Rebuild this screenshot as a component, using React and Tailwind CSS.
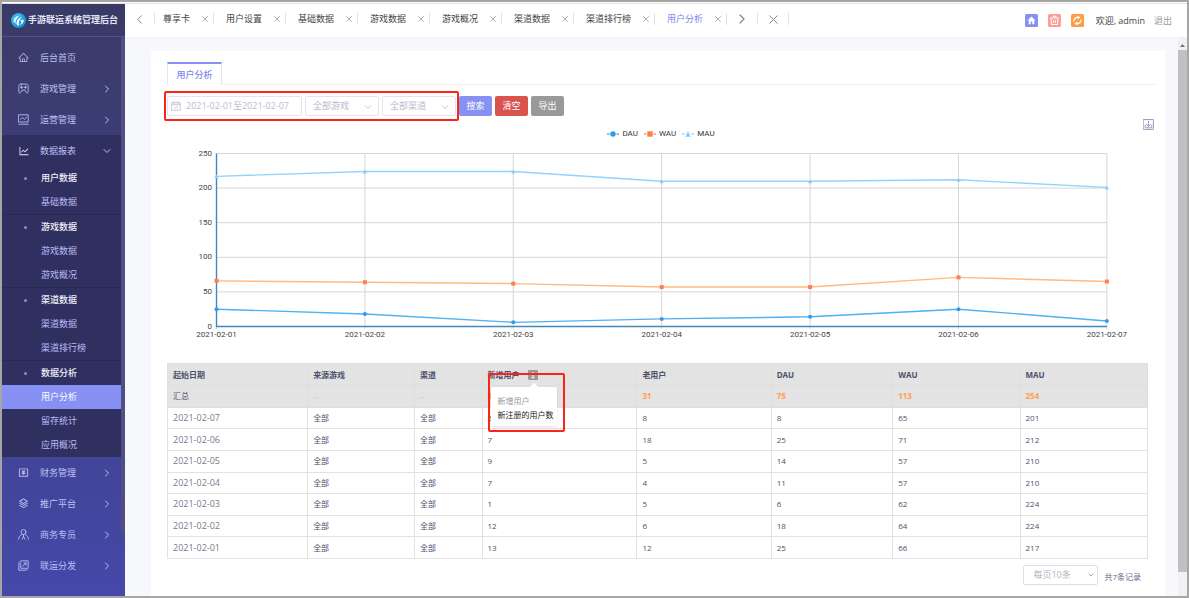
import React from "react";
import { ChevronDown, ChevronLeft, ChevronRight, X } from "lucide-react";
import { AiOutlineHome, AiOutlineLineChart } from "react-icons/ai";
import { RiMoneyCnyBoxLine, RiStackLine } from "react-icons/ri";

const stroke = {
  viewBox: "0 0 20 20",
  fill: "none",
  stroke: "currentColor",
  strokeWidth: 1.6,
  strokeLinecap: "round",
  strokeLinejoin: "round",
};

const GameIcon = (p) => (
  <svg {...stroke} {...p}>
    <path d="M5.500 2h9c3 0 4 1.500 4 4.500V16c0 2.500-2.500 3-3.500 1.200L12.800 13H7.200L5 17.200C4 19 1.500 18.500 1.500 16V6.500C1.500 3.500 2.500 2 5.500 2z" />
    <path d="M6.500 5.500v4.400M4.300 7.700h4.400M13.500 5.500v4.400M11.300 7.700h4.400" />
  </svg>
);
const MonitorIcon = (p) => (
  <svg {...stroke} {...p}>
    <path d="M1.500 1.500h17v13h-17zM1.500 18.500h17M4.500 9.500l3.500-3 3.500 3 4-3.500" />
  </svg>
);
const PersonIcon = (p) => (
  <svg {...stroke} {...p}>
    <circle cx="10" cy="5.500" r="4.500" />
    <path d="M1 18.500c.3-4 2-6.500 6-8.500M19 18.500c-.3-4-2-6.500-6-8.500M10 10.500V14M10 14l-2.500 4.500M10 14l2.500 4.500" />
  </svg>
);
const ShareIcon = (p) => (
  <svg {...stroke} {...p}>
    <path d="M6 1.500h12.500v13L15 18.500H1.500V5.500zM5 5.500V15h10.500M8.500 11.500l6-6M10.500 5.300h4.200v4.200" />
  </svg>
);
const Logo = () => (
  <svg viewBox="0 0 30 30" className="size-[15px] shrink-0" aria-hidden="true">
    <defs>
      <linearGradient id="logo" x1="0" y1="0" x2="1" y2="1">
        <stop offset="0" stopColor="#35c3ee" />
        <stop offset="1" stopColor="#1684cf" />
      </linearGradient>
    </defs>
    <circle cx="15" cy="15" r="15" fill="url(#logo)" />
    <path d="M18 4C11 6 5 10 5 15c0 3 2 5 4 6 0-6 3-11 9-17z" fill="#d8f6ff" />
    <path d="M22 7c-6 3-11 7-11 13 0 3 2 5 5 6-2-7 1-13 6-19z" fill="#fff" />
    <path d="M18 14c3-1 5-1 8 0-1 6-4 9-9 10 3-3 4-5 3-8z" fill="#d8f6ff" />
  </svg>
);

const topItems = [
  { label: "后台首页", Icon: AiOutlineHome, leaf: true },
  { label: "游戏管理", Icon: GameIcon },
  { label: "运营管理", Icon: MonitorIcon },
];
const groups = [
  { title: "用户数据", items: ["基础数据"] },
  { title: "游戏数据", items: ["游戏数据", "游戏概况"] },
  { title: "渠道数据", items: ["渠道数据", "渠道排行榜"] },
  { title: "数据分析", items: ["用户分析", "留存统计", "应用概况"] },
];
const bottomItems = [
  { label: "财务管理", Icon: RiMoneyCnyBoxLine },
  { label: "推广平台", Icon: RiStackLine },
  { label: "商务专员", Icon: PersonIcon },
  { label: "联运分发", Icon: ShareIcon },
];

function MenuItem({ label, Icon, leaf, open }) {
  const Arrow = open ? ChevronDown : ChevronRight;
  return (
    <a href="#" className="flex h-[31px] items-center pr-2 pl-4 text-[#bcc0f6]">
      <Icon className={open ? "size-3 shrink-0 text-[#e6e7fa]" : "size-[11px] shrink-0"} aria-hidden="true" />
      <span className={open ? "ml-[10px] grow" : "ml-[11px] grow"}>{label}</span>
      {!leaf && <Arrow className="size-3" strokeWidth={2} aria-hidden="true" />}
    </a>
  );
}

function Sidebar() {
  return (
    <aside className="flex w-[123px] shrink-0 flex-col bg-linear-to-b from-[#3a3a66] via-[#3f4087] to-[#4548a8] text-[9px]">
      <div className="flex h-[33px] shrink-0 items-center gap-[2px] overflow-hidden border-b border-[#4b4f9e] pl-[9px] font-bold whitespace-nowrap text-[#e4e5f5]">
        <Logo />
        手游联运系统管理后台
      </div>
      <div className="flex grow">
        <nav className="grow pt-[5px]">
          {topItems.map((m) => (
            <MenuItem key={m.label} {...m} />
          ))}
          <div className="bg-[#303060]">
            <MenuItem label="数据报表" Icon={AiOutlineLineChart} open />
            {groups.map((g) => (
              <div key={g.title} className="border-b border-[#292952] last:border-b-0">
                <div className="flex h-6 items-center font-medium text-[#f1f1fa]">
                  <span className="ml-[22px] size-[3px] rounded-full bg-[#8e8eb4]" />
                  <span className="ml-[14px]">{g.title}</span>
                </div>
                {g.items.map((t) => (
                  <a
                    key={t}
                    href="#"
                    className={
                      t === "用户分析"
                        ? "flex h-6 items-center bg-[#8691f3] pl-[39px] text-white"
                        : "flex h-6 items-center pl-[39px] text-[#b8bcf4]"
                    }
                  >
                    {t}
                  </a>
                ))}
              </div>
            ))}
          </div>
          {bottomItems.map((m) => (
            <MenuItem key={m.label} {...m} />
          ))}
        </nav>
        <div className="w-1">
          <div className="h-[498px] rounded-b bg-[#4f4f83]" />
        </div>
      </div>
    </aside>
  );
}

const tabs = ["尊享卡", "用户设置", "基础数据", "游戏数据", "游戏概况", "渠道数据", "渠道排行榜", "用户分析"];

function Header() {
  return (
    <header className="flex h-[33px] items-center bg-white pr-[15px] text-[9px] text-[#444]">
      <div className="flex items-center pb-[3px]">
        <button aria-label="向左" className="flex h-3 w-[30px] items-center justify-center border-r border-[#e4e4e4] text-[#888]">
          <ChevronLeft className="size-[15px]" strokeWidth={1.6} />
        </button>
        {tabs.map((t) => (
          <div
            key={t}
            className="flex h-3 items-center gap-[10px] border-r border-[#e4e4e4] pr-[3px] pl-3 leading-3 whitespace-nowrap first-of-type:pl-2"
          >
            <a href="#" className={t === "用户分析" ? "text-[#7f86ee]" : ""}>
              {t}
            </a>
            <button aria-label={"关闭" + t} className="text-[#999]">
              <X className="size-[10px]" strokeWidth={1.8} />
            </button>
          </div>
        ))}
        <button aria-label="向右" className="flex h-3 w-[31px] items-center justify-center border-r border-[#e4e4e4] text-[#888]">
          <ChevronRight className="size-4" strokeWidth={1.8} />
        </button>
        <button aria-label="关闭全部" className="flex h-3 w-[31px] items-center justify-center border-r border-[#e4e4e4] text-[#888]">
          <X className="size-[15px]" strokeWidth={1.6} />
        </button>
      </div>
      <div className="ml-auto flex items-center whitespace-nowrap">
        <div className="mr-3 flex gap-[10px]">
          <button aria-label="首页">
            <svg viewBox="0 0 26 26" className="size-[13px]">
              <rect width="26" height="26" rx="3" fill="#8590f2" />
              <path d="M13 5l8 8h-2.500v7.500h-4V15h-3v5.500h-4V13H5z" fill="#fff" />
            </svg>
          </button>
          <button aria-label="清理">
            <svg viewBox="0 0 26 26" className="size-[13px]">
              <rect width="26" height="26" rx="3" fill="#fc9d98" />
              <path d="M4 8h18M10 7V4.500h6V7M6.500 9v12h13V9M11 12.500v5.500M15 12.500v5.500" fill="none" stroke="#fff" strokeWidth="1.900" />
            </svg>
          </button>
          <button aria-label="刷新">
            <svg viewBox="0 0 26 26" className="size-[13px]">
              <rect width="26" height="26" rx="3" fill="#ff9d45" />
              <path d="M6 15c-1-5 3-8.500 8-8M20 11c1 5-3 8.500-8 8" fill="none" stroke="#fff" strokeWidth="2.600" />
              <path d="M13 3l6 4-6 4zM13 15v8l-6-4z" fill="#fff" />
            </svg>
          </button>
        </div>
        <span className="mr-[9px]">欢迎, admin</span>
        <a href="#" className="text-[#999]">
          退出
        </a>
      </div>
    </header>
  );
}

function FilterSelect({ label, text }) {
  return (
    <div className="relative w-[74px]">
      <select
        aria-label={label}
        className="h-5 w-full appearance-none rounded-xs border border-[#e4e4e8] bg-white pl-[7px] text-[9px] text-[#b9bccf]"
      >
        <option>{text}</option>
      </select>
      <ChevronDown className="pointer-events-none absolute top-[5px] right-[5px] size-3 text-[#b9bdf0]" strokeWidth={1.8} />
    </div>
  );
}

function Filters() {
  return (
    <form className="mt-[11px] flex gap-[3px] text-[9px]" onSubmit={(e) => e.preventDefault()}>
      <div className="relative flex gap-[3px]">
        <label className="flex h-5 w-[135px] items-center gap-[5px] rounded-xs border border-[#e4e4e8] pl-[3px]">
          <svg {...stroke} className="size-[10px] shrink-0 text-[#b9bccf]" aria-hidden="true">
            <path d="M1.500 3.500h17v15h-17zM1.500 7.500h17M6 1v4M14 1v4M7 12.500l2.500 2.500 4-4.500" />
          </svg>
          <input
            aria-label="日期范围"
            defaultValue="2021-02-01至2021-02-07"
            className="w-full min-w-0 bg-transparent text-[9px] text-[#b9bccf] outline-none"
          />
        </label>
        <FilterSelect label="游戏" text="全部游戏" />
        <FilterSelect label="渠道" text="全部渠道" />
        <div className="pointer-events-none absolute -inset-x-[3px] -inset-y-[5px] rounded-xs border-2 border-[#fb2418]" />
      </div>
      <button className="h-5 w-[33px] rounded-xs bg-[#8691f3] text-white">搜索</button>
      <button className="h-5 w-[33px] rounded-xs bg-[#d9534f] text-white">清空</button>
      <button className="h-5 w-[33px] rounded-xs bg-[#999] text-white">导出</button>
    </form>
  );
}

const series = [
  { name: "DAU", line: "#4fb0f2", mark: "#2f9bea", data: [25, 18, 6, 11, 14, 25, 8] },
  { name: "WAU", line: "#ffb980", mark: "#ff7f50", data: [66, 64, 62, 57, 57, 71, 65] },
  { name: "MAU", line: "#94d3fb", mark: "#87cefa", data: [217, 224, 224, 210, 210, 212, 201] },
];
const px = (i) => 49.5 + i * 148.4;
const py = (v) => 181.5 - v * 0.692;

function Mark({ kind, x, y, color, r = 2 }) {
  if (kind === "DAU") return <circle cx={x} cy={y} r={r} fill={color} />;
  if (kind === "WAU") return <rect x={x - r} y={y - r} width={2 * r} height={2 * r} fill={color} />;
  return <polygon points={`${x},${y - r} ${x + r},${y + r} ${x - r},${y + r}`} fill={color} />;
}

function Chart() {
  return (
    <section>
      <div className="flex h-[29px] pt-[3px]">
        <div className="flex-1" />
        <div className="flex items-center gap-[6px] pt-[4px] font-['Roboto',sans-serif] text-[8px] text-[#333]">
          {series.map((s) => (
            <span key={s.name} className="flex items-center gap-[3px]">
              <svg viewBox="0 0 12 8" className="h-2 w-3" aria-hidden="true">
                <path d="M0 4h12" stroke={s.mark} strokeWidth="1.200" />
                <rect x="2.500" width="7" height="8" fill="#fff" />
                <Mark kind={s.name} x={6} y={4} r={2.7} color={s.mark} />
              </svg>
              {s.name}
            </span>
          ))}
        </div>
        <div className="flex flex-1 items-start justify-end">
          <button aria-label="保存为图片" className="mr-[1px] text-[#9a9bbd]">
            <svg {...stroke} strokeWidth="1.800" className="size-[11px]">
              <path d="M1 1h18v18H1zM10 4v9M6.500 10l3.500 3.500 3.500-3.500M4 11v5h12v-5" />
            </svg>
          </button>
        </div>
      </div>
      <svg viewBox="0 0 988 200" className="w-full" fontFamily="Roboto, sans-serif" fontSize="8" fill="#444">
        <g stroke="#d6d6d6" strokeWidth="1">
          {[0, 50, 100, 150, 200, 250].map((v) => (
            <path key={v} d={`M49.500 ${py(v)}H${px(6)}`} />
          ))}
          {series[0].data.map((_, i) => (
            <path key={i} d={`M${px(i)} ${py(250)}V184`} />
          ))}
        </g>
        <path d={`M49.500 ${py(250)}V${py(0)}H${px(6)}`} fill="none" stroke="#4488bb" strokeWidth="1.400" />
        {[0, 50, 100, 150, 200, 250].map((v) => (
          <text key={v} x="45" y={py(v) + 2} textAnchor="end">
            {v}
          </text>
        ))}
        {series[0].data.map((_, i) => (
          <text key={i} x={px(i)} y="192" textAnchor="middle">
            {"2021-02-0" + (i + 1)}
          </text>
        ))}
        {series.map((s) => (
          <g key={s.name}>
            <polyline
              points={s.data.map((v, i) => `${px(i)},${py(v)}`).join(" ")}
              fill="none"
              stroke={s.line}
              strokeWidth="1.400"
            />
            {s.data.map((v, i) => (
              <Mark key={i} kind={s.name} x={px(i)} y={py(v)} color={s.mark} />
            ))}
          </g>
        ))}
      </svg>
    </section>
  );
}

const rows = [
  ["2021-02-07", "全部", "全部", 6, 8, 8, 65, 201],
  ["2021-02-06", "全部", "全部", 7, 18, 25, 71, 212],
  ["2021-02-05", "全部", "全部", 9, 5, 14, 57, 210],
  ["2021-02-04", "全部", "全部", 7, 4, 11, 57, 210],
  ["2021-02-03", "全部", "全部", 1, 5, 6, 62, 224],
  ["2021-02-02", "全部", "全部", 12, 6, 18, 64, 224],
  ["2021-02-01", "全部", "全部", 13, 12, 25, 66, 217],
];
const summary = ["汇总", "--", "--", 55, 31, 75, 113, 254];
const heads = ["起始日期", "来源游戏", "渠道", "新增用户", "老用户", "DAU", "WAU", "MAU"];

function DataTable() {
  return (
    <div className="mt-[18px] pr-[7px]">
      <table className="h-[196px] w-full table-fixed border-collapse text-left text-[8px] leading-3 text-[#4d506b]">
        <colgroup>
          <col className="w-[14.3%]" />
          <col className="w-[10.9%]" />
          <col className="w-[6.9%]" />
          <col className="w-[15.8%]" />
          <col className="w-[13.7%]" />
          <col className="w-[12.4%]" />
          <col className="w-[13%]" />
          <col className="w-[13%]" />
        </colgroup>
        <thead className="bg-[#e3e3e3]">
          <tr className="h-[22px]">
            {heads.map((h) => (
              <th key={h} className="relative border border-[#dedede] px-[5px] font-bold">
                {h}
                {h === "新增用户" && (
                  <>
                    <button aria-label="新增用户说明" className="ml-2 inline-block align-middle">
                      <svg viewBox="0 0 20 20" className="size-[10px]">
                        <rect width="20" height="20" rx="2" fill="#999" />
                        <path d="M10 4v3M7.500 9.500H10V15M7 15.500h6" stroke="#fff" strokeWidth="2" fill="none" />
                      </svg>
                    </button>
                    <div
                      role="tooltip"
                      className="absolute top-[23px] left-[8px] z-10 h-[39px] w-[66px] rounded-xs bg-white pt-[7px] pl-[7px] leading-[14px] font-normal whitespace-nowrap shadow-sm"
                    >
                      <span className="absolute -top-[3px] left-[40px] size-[6px] rotate-45 bg-white" />
                      <p className="text-[#999]">新增用户</p>
                      <p className="text-[#222]">新注册的用户数</p>
                    </div>
                    <div className="pointer-events-none absolute top-[9px] left-[5px] z-20 h-[59px] w-[77px] rounded-xs border-2 border-[#fb2418]" />
                  </>
                )}
              </th>
            ))}
          </tr>
        </thead>
        <tbody>
          <tr className="bg-[#e3e3e3]">
            {summary.map((c, i) => (
              <td
                key={i}
                className={
                  i === 0
                    ? "border border-[#dedede] px-[5px]"
                    : i < 3
                      ? "border border-[#dedede] px-[5px] text-[#f7b98a]"
                      : "border border-[#dedede] px-[5px] font-bold text-[#ff9f4f]"
                }
              >
                {c}
              </td>
            ))}
          </tr>
          {rows.map((r) => (
            <tr key={r[0]}>
              {r.map((c, i) => (
                <td
                  key={i}
                  className={
                    i === 0
                      ? "border border-[#e2e2e2] px-[5px] text-[9px] text-[#777b8c]"
                      : "border border-[#e2e2e2] px-[5px]"
                  }
                >
                  {c}
                </td>
              ))}
            </tr>
          ))}
        </tbody>
      </table>
      <div className="mt-[6px] flex items-center justify-end gap-[6px] pr-[7px] text-[8px] text-[#666a8a]">
        <div className="relative w-[75px]">
          <select
            aria-label="每页条数"
            className="h-5 w-full appearance-none rounded-xs border border-[#dedee2] bg-white pl-[9px] text-[9px] text-[#b0b5c0]"
          >
            <option>每页10条</option>
          </select>
          <ChevronDown className="pointer-events-none absolute top-[6px] right-[3px] size-2 text-[#a0a4b0]" strokeWidth={3} />
        </div>
        <span className="pt-1">共7条记录</span>
      </div>
    </div>
  );
}

export default function App() {
  return (
    <div className="flex min-h-screen flex-col border-2 border-[#a6a6a6] bg-white font-['Open_Sans','Noto_Sans_CJK_SC',sans-serif]">
      <div className="mt-px flex grow border-t border-[#e3e3e3]">
        <Sidebar />
        <div className="flex min-w-0 grow flex-col bg-[#f6f8fb]">
          <Header />
          <div className="flex grow border-t border-[#eff2fb]">
            <main className="min-w-0 grow pt-[13px] pr-[13px] pl-[26px]">
              <div className="h-full bg-white pt-[11px] pr-[10px] pb-2 pl-4">
                <div role="tablist" className="flex border-b border-[#ececec]">
                  <button
                    role="tab"
                    aria-selected="true"
                    className="-mb-px h-[23px] w-[55px] border-x border-t-2 border-x-[#e6e6e6] border-t-[#8691f3] bg-white text-[9px] font-medium text-[#7f89ee]"
                  >
                    用户分析
                  </button>
                </div>
                <Filters />
                <Chart />
                <DataTable />
              </div>
            </main>
            <div className="w-[9px] shrink-0 bg-[#f1f1f1] pt-[3px]" aria-hidden="true">
              <svg viewBox="0 0 9 9" className="size-[9px]">
                <path d="M4.500 3l2.500 3H2z" fill="#777" />
              </svg>
              <div className="h-[522px] bg-[#c1c1c1]" />
            </div>
          </div>
        </div>
      </div>
    </div>
  );
}
